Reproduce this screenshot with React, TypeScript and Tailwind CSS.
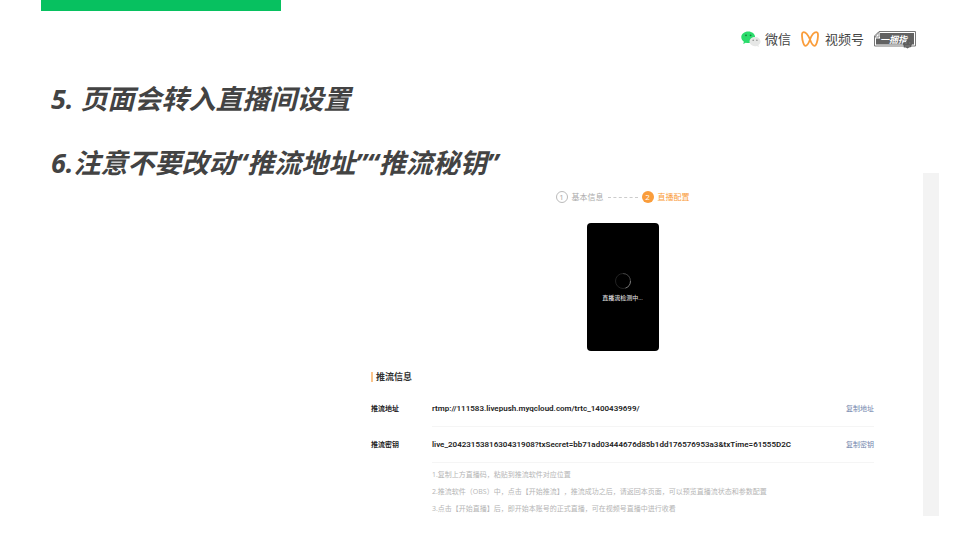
import type { ReactNode } from "react";

const STREAM_ROWS = [
  {
    label: "推流地址",
    value: "rtmp://111583.livepush.myqcloud.com/trtc_1400439699/",
    action: "复制地址",
  },
  {
    label: "推流密钥",
    value:
      "live_2042315381630431908?txSecret=bb71ad03444676d85b1dd176576953a3&txTime=61555D2C",
    action: "复制密钥",
  },
];

const NOTES = [
  "1.复制上方直播码，粘贴到推流软件对应位置",
  "2.推流软件（OBS）中，点击【开始推流】，推流成功之后，请返回本页面，可以预览直播流状态和参数配置",
  "3.点击【开始直播】后，即开始本账号的正式直播，可在视频号直播中进行收看",
];

function WechatIcon() {
  return (
    <svg width="20" height="16" viewBox="0 0 20 16" aria-hidden="true">
      <path
        d="M7.200.5C3.300.5.3 3 .3 6.200c0 1.800 1 3.400 2.600 4.500l-.7 2.300 2.600-1.300c.8.2 1.600.3 2.400.3 3.900 0 6.900-2.500 6.900-5.800S11.100.5 7.200.5z"
        fill="#2bdc6c"
      />
      <circle cx="5" cy="4.300" r="0.900" fill="#177a3e" />
      <circle cx="9.600" cy="4.300" r="0.900" fill="#177a3e" />
      <path
        d="M14 6c-3.100 0-5.500 2-5.500 4.600s2.400 4.600 5.500 4.600c.7 0 1.300-.1 1.900-.3l2 1-.5-1.800c1.300-.8 2.100-2.100 2.100-3.500C19.500 8 17.100 6 14 6z"
        fill="#e6e7e6"
      />
      <circle cx="12.200" cy="9.300" r="0.800" fill="#8b8d8b" />
      <circle cx="15.900" cy="9.300" r="0.800" fill="#8b8d8b" />
    </svg>
  );
}

function ChannelsIcon() {
  return (
    <svg
      width="18"
      height="16"
      viewBox="0 0 18 16"
      fill="none"
      stroke="#fa9d3b"
      strokeWidth="1.8"
      strokeLinejoin="round"
      strokeLinecap="round"
      aria-hidden="true"
    >
      <path d="M9 8.500C7.300 4.500 4.700 1.100 2.700 1.100 1.300 1.100.9 2.700 1 5c.2 4.300 1.600 9.800 3.500 9.800C6.200 14.800 7.800 11.800 9 8.500c1.200-3.300 3.900-7.400 6.300-7.400 1.400 0 1.800 1.600 1.700 3.900-.2 4.300-1.600 9.800-3.500 9.800-1.700 0-3.300-3-4.500-6.300z" />
    </svg>
  );
}

function ThumbBadge() {
  return (
    <span className="relative flex h-4 w-[42px] items-center pl-1.5">
      <svg
        className="absolute inset-0"
        width="42"
        height="18"
        viewBox="0 0 42 18"
        aria-hidden="true"
      >
        <path d="M5 .5h36.500v14.500H.5V5z" fill="#fff" stroke="#777" />
        <path d="M6 2h34v11.500H2V7.500h4z" fill="#626262" />
        <path d="M5 1v5H1z" fill="#fff" stroke="#777" strokeWidth="0.800" />
      </svg>
      <span className="relative text-[9px] leading-none font-bold text-white italic">
        一捆指
      </span>
      <svg
        className="absolute -bottom-0.5 left-7"
        width="11"
        height="11"
        viewBox="0 0 11 11"
        aria-hidden="true"
      >
        <path
          d="M5 1.500l2 .5 1.800.2.600 1.800.9 1.500-.8 1.800-.3 1.800-2.100.4-1.600 1-1.700-.9-2-.2-.2-2L.7 5.800l1-1.600 2.300-.2z"
          fill="#5d5d5d"
        />
        <path d="M3 5h2M7 5h1.500M3 8h5" stroke="#858585" strokeWidth="0.800" />
      </svg>
    </span>
  );
}

function Title({ children }: { children: ReactNode }) {
  return (
    <h2 className="text-[27px] leading-8 font-bold text-[#434343] italic">
      {children}
    </h2>
  );
}

function Steps() {
  return (
    <ol className="flex items-center justify-center text-[8px] leading-3">
      <li className="flex items-center gap-1 text-[#aaa]">
        <span className="flex size-3 items-center justify-center rounded-full border border-[#bbb]">
          1
        </span>
        基本信息
      </li>
      <li
        className="mx-1 w-[30px] border-t border-dashed border-[#ccc]"
        aria-hidden="true"
      />
      <li className="flex items-center gap-1 text-[#fa9d3b]">
        <span className="flex size-3 items-center justify-center rounded-full bg-[#fa9d3b] text-white">
          2
        </span>
        直播配置
      </li>
    </ol>
  );
}

function Preview() {
  return (
    <div className="mx-auto mt-5 flex h-32 w-[72px] flex-col items-center justify-center gap-1 rounded bg-black">
      <svg width="18" height="18" viewBox="0 0 18 18" fill="none" aria-hidden="true">
        <circle cx="9" cy="9" r="7.500" stroke="#222" />
        <path d="M9 1.500A7.500 7.500 0 0 1 16.500 9" stroke="#3d3d3d" />
        <path d="M16.500 9A7.500 7.500 0 0 1 11.500 16.100" stroke="#777" />
      </svg>
      <p className="text-[6px] leading-2 font-medium text-[#ddd]">直播流检测中...</p>
    </div>
  );
}

export default function App() {
  return (
    <div className="min-h-screen bg-white font-['Open_Sans','Noto_Sans_CJK_SC',sans-serif]">
      <div className="ml-[41px] h-[11px] w-1/4 bg-[#07c160]" />

      <header className="mt-5 mr-11 flex h-4 items-center justify-end text-[13px] leading-4 text-[#444]">
        <WechatIcon />
        <span className="ml-1">微信</span>
        <span className="ml-2.5 flex items-center gap-1.5">
          <ChannelsIcon />
          视频号
        </span>
        <span className="ml-2.5">
          <ThumbBadge />
        </span>
      </header>

      <div className="mt-9 ml-[51px] flex flex-col gap-8">
        <Title>5. 页面会转入直播间设置</Title>
        <Title>6.注意不要改动“推流地址”“推流秘钥”</Title>
      </div>

      <main className="mr-[21px] -mt-1.5 flex justify-end gap-[49px] pl-[371px]">
        <section className="min-w-0 flex-1 pt-[18px]">
          <Steps />
          <Preview />

          <h3 className="mt-5 flex items-center gap-[3px] text-[9px] leading-3 font-bold text-[#333]">
            <span className="h-2.5 w-0.5 bg-[#fbc48a]" />
            推流信息
          </h3>

          <dl className="mt-2 text-[8px] leading-3 text-[#222]">
            {STREAM_ROWS.map((row) => (
              <div key={row.label} className="flex h-9 items-center">
                <dt className="w-[61px] shrink-0 text-[7px] font-bold">
                  {row.label}
                </dt>
                <dd className="flex h-full flex-1 items-center justify-between border-b border-[#f5f5f5]">
                  <span className="font-['Roboto',sans-serif] font-semibold">
                    {row.value}
                  </span>
                  <button type="button" className="text-[7px] text-[#7184ab]">
                    {row.action}
                  </button>
                </dd>
              </div>
            ))}
          </dl>

          <div className="mt-[3px] ml-[61px] text-[7px] leading-[17px] text-[#b5b5b5] [text-spacing-trim:space-all]">
            {NOTES.map((note) => (
              <p key={note}>{note}</p>
            ))}
          </div>
        </section>
        <div className="h-[343px] w-4 shrink-0 bg-[#f3f3f3]" />
      </main>
    </div>
  );
}
